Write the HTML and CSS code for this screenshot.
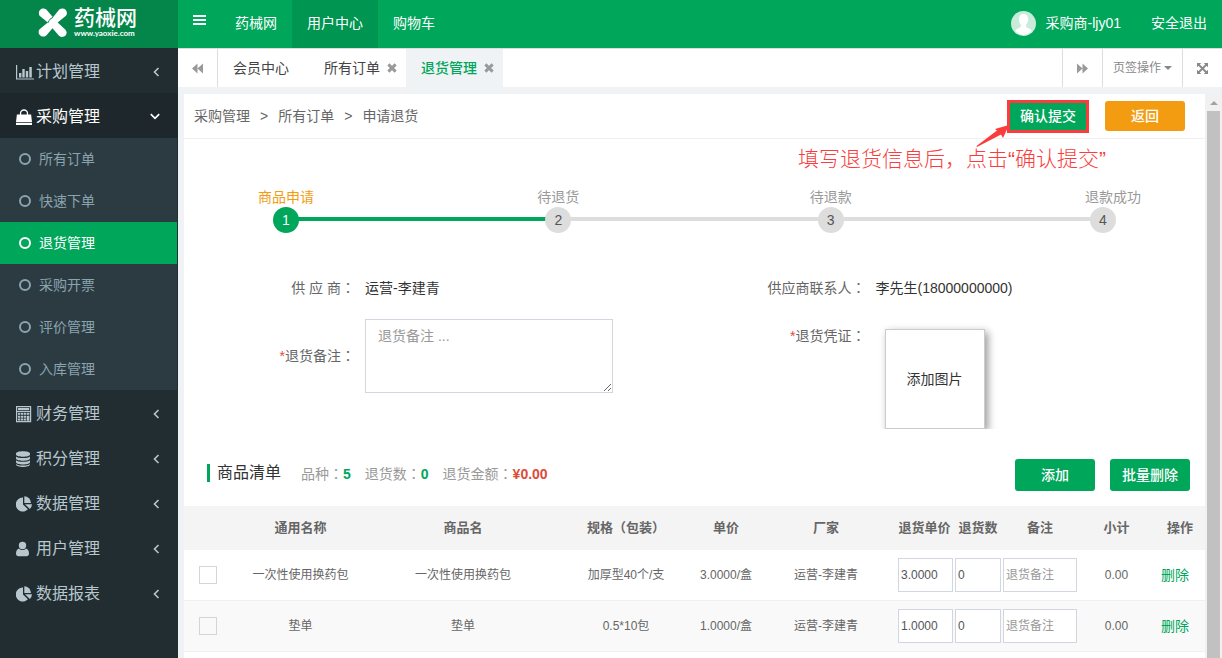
FILE: index.html
```html
<!DOCTYPE html>
<html lang="zh-CN">
<head>
<meta charset="utf-8">
<title>药械网 - 退货管理</title>
<link rel="stylesheet" href="styles.css">
</head>
<body>
<svg class="defs" aria-hidden="true">
  <symbol id="chev-left" viewBox="0 0 7 10"><path d="M5.500 1 1.500 5l4 4" fill="none" stroke="currentColor" stroke-width="1.600"/></symbol>
  <symbol id="pie" viewBox="0 0 16 16"><path d="M7 1.500V8.400l4.900 4.900A7 7 0 1 1 7 1.500z" fill="currentColor"/><path d="M8.300.300A7 7 0 0 1 15 7H8.300z" fill="currentColor"/><path d="M9 8.300H16a7 7 0 0 1-2.200 4.800z" fill="currentColor"/></symbol>
  <symbol id="cross" viewBox="0 0 11 11"><path d="M1.500 1.500l8 8M9.500 1.500l-8 8" stroke="currentColor" stroke-width="3.200" fill="none"/></symbol>
</svg>
<div class="app">
  <aside class="sidebar">
    <a class="logo" href="#">
      <svg class="logo-mark" viewBox="0 0 28 28" aria-hidden="true"><path d="M1.500 7.500C-1 3 4 -1.500 8 1.500L14.500 9 20.500 1.500C25-1.500 30 3 27 7.500L19 14l7.500 7c3.500 4-1.500 9-6 6L14 19.500 8 26.500c-4.500 3.500-9.500-2-6.500-6L9.500 14z" fill="#fff"/><path d="M9.300 14.500C10.500 11.500 12 10 14.500 8.800" stroke="#04864a" stroke-width="1" fill="none"/></svg>
      <span class="logo-text"><span class="logo-name">药械网</span><span class="logo-url">www.yaoxie.com</span></span>
    </a>
    <nav>
      <ul class="menu">
        <li><a class="menu-head" href="#"><svg class="mi" viewBox="0 0 16 16"><path d="M.600 1v14H18" fill="none" stroke="currentColor" stroke-width="1.200"/><path d="M3 9h2.400v4.500H3zM6.300 5h2.400v8.500H6.300zM9.800 7h2.400v6.500H9.800zM13.300 3h2.500v10.500h-2.500z" fill="currentColor"/></svg><span>计划管理</span><svg class="arrow"><use href="#chev-left"/></svg></a></li>
        <li><a class="menu-head open" href="#"><svg class="mi" viewBox="0 0 16 16"><path d="M.900 5.500h14.200L16 13H0zM0 13.700h16V16H0z" fill="currentColor"/><path d="M4.500 8V4.500a3.500 3.500 0 0 1 7 0V8" fill="none" stroke="currentColor" stroke-width="1.300"/></svg><span>采购管理</span><svg class="arrow-down" viewBox="0 0 10 7"><path d="M.800 1.200 5 5.400l4.200-4.200" fill="none" stroke="currentColor" stroke-width="1.700"/></svg></a>
          <ul class="submenu">
            <li><a href="#">所有订单</a></li>
            <li><a href="#">快速下单</a></li>
            <li><a class="current" href="#">退货管理</a></li>
            <li><a href="#">采购开票</a></li>
            <li><a href="#">评价管理</a></li>
            <li><a href="#">入库管理</a></li>
          </ul>
        </li>
        <li><a class="menu-head" href="#"><svg class="mi" viewBox="0 0 16 16"><path d="M.600.600h14v15h-14zM.600 5.500h14" fill="none" stroke="currentColor" stroke-width="1.200"/><path d="M2 2h11.200v2.200H2zM2 6.800h2.400v2H2zM5 6.800h2.400v2H5zM8 6.800h2.400v2H8zM11 6.800h2.400v2H11zM2 9.700h2.400v2H2zM5 9.700h2.400v2H5zM8 9.700h2.400v2H8zM11 9.700h2.400v5H11zM2 12.600h2.400v2H2zM5 12.600h2.400v2H5zM8 12.600h2.400v2H8z" fill="currentColor"/></svg><span>财务管理</span><svg class="arrow"><use href="#chev-left"/></svg></a></li>
        <li><a class="menu-head" href="#"><svg class="mi" viewBox="0 0 16 16"><path d="M0 2.500C0-.600 14-.600 14 2.500v1c0 3-14 3-14 0zM0 5.500c2 2 12 2 14 0v2c0 3-14 3-14 0zM0 9.300c2 2 12 2 14 0v2c0 3-14 3-14 0zM0 13c2 2 12 2 14 0v.500c0 3.300-14 3.300-14 0z" fill="currentColor"/></svg><span>积分管理</span><svg class="arrow"><use href="#chev-left"/></svg></a></li>
        <li><a class="menu-head" href="#"><svg class="mi"><use href="#pie"/></svg><span>数据管理</span><svg class="arrow"><use href="#chev-left"/></svg></a></li>
        <li><a class="menu-head" href="#"><svg class="mi" viewBox="0 0 16 16"><circle cx="6.500" cy="4.500" r="3.700" fill="currentColor"/><path d="M3 7.500c2 2 5 2 7 0 2 .500 3 2.500 3 5 0 2-1 2.700-2.500 2.700h-8C1 15.200 0 14.500 0 12.500c0-2.500 1-4.500 3-5z" fill="currentColor"/></svg><span>用户管理</span><svg class="arrow"><use href="#chev-left"/></svg></a></li>
        <li><a class="menu-head" href="#"><svg class="mi"><use href="#pie"/></svg><span>数据报表</span><svg class="arrow"><use href="#chev-left"/></svg></a></li>
      </ul>
    </nav>
  </aside>

  <div class="main">
    <header class="topbar">
      <button class="toggle" type="button" aria-label="切换菜单"><svg viewBox="0 0 13 10"><path d="M0 0h13v2H0zM0 4h13v2H0zM0 8h13v2H0z" fill="#fff"/></svg></button>
      <a href="#">药械网</a>
      <a class="active" href="#">用户中心</a>
      <a href="#">购物车</a>
      <a class="user" href="#"><svg class="avatar" viewBox="0 0 25 25"><circle cx="12.500" cy="12.500" r="12.500" fill="#c9ebda"/><path d="M12.500 3c3 0 4.700 2 4.700 5.300 0 2.500-.900 4-2 5.200-.400 2 0 2.800 2.300 3.700 2 .800 3 1.700 3.300 2.600A11.500 11.500 0 0 1 12.500 24a11.500 11.500 0 0 1-8.300-4.200c.300-.900 1.300-1.800 3.300-2.600 2.300-.900 2.700-1.700 2.300-3.700-1.100-1.200-2-2.700-2-5.200C7.800 5 9.500 3 12.500 3z" fill="#fff"/></svg>采购商-ljy01</a>
      <a href="#">安全退出</a>
    </header>

    <div class="tabbar">
      <button class="tab-btn first" type="button" aria-label="向左"><svg viewBox="0 0 11 10"><path d="M5.500 0v10L0 5zM11 0v10L5.500 5z" fill="#999"/></svg></button>
      <div class="tabs">
        <a class="tab home" href="#">会员中心</a>
        <a class="tab" href="#">所有订单<svg><use href="#cross"/></svg></a>
        <a class="tab selected" href="#">退货管理<svg><use href="#cross"/></svg></a>
      </div>
      <button class="tab-btn" type="button" aria-label="向右"><svg viewBox="0 0 11 10"><path d="M5.500 0v10L11 5zM0 0v10l5.500-5z" fill="#999"/></svg></button>
      <button class="tab-btn ops" type="button">页签操作<span class="caret"></span></button>
      <button class="tab-btn" type="button" aria-label="全屏"><svg viewBox="0 0 11 11"><path d="M0 0h4.200L0 4.200zM11 0v4.200L6.800 0zM0 11V6.800L4.200 11zM11 11H6.800L11 6.800z" fill="#888"/><path d="M1.500 1.500l8 8M9.500 1.500l-8 8" stroke="#888" stroke-width="1.800"/></svg></button>
    </div>

    <div class="frame">
      <main class="page">
        <div class="page-head">
          <nav class="crumbs"><a href="#">采购管理</a><span>&gt;</span><a href="#">所有订单</a><span>&gt;</span><a href="#">申请退货</a></nav>
          <div class="confirm-wrap">
            <button class="btn confirm" type="button">确认提交</button>
            <svg class="note-arrow" viewBox="0 0 34 24" aria-hidden="true"><path d="M.500 22 21 6.500 19 5 33 1 27 14l-2-3.500L1 23z" fill="#fa3c3c"/></svg>
            <p class="note">填写退货信息后，点击“确认提交”</p>
          </div>
          <button class="btn back" type="button">返回</button>
        </div>

        <ol class="steps">
          <li class="step on"><span class="step-label">商品申请</span><span class="dot">1</span></li>
          <li class="line on"></li>
          <li class="step"><span class="step-label">待退货</span><span class="dot">2</span></li>
          <li class="line"></li>
          <li class="step"><span class="step-label">待退款</span><span class="dot">3</span></li>
          <li class="line"></li>
          <li class="step last"><span class="step-label">退款成功</span><span class="dot">4</span></li>
        </ol>

        <form class="form">
          <div class="field"><span class="label">供 应 商<span class="colon" lang="zh-TW">：</span></span><span class="value">运营-李建青</span></div>
          <div class="field"><span class="label">供应商联系人<span class="colon" lang="zh-TW">：</span></span><span class="value">李先生(18000000000)</span></div>
          <div class="field"><label class="label mid" for="remark"><i>*</i>退货备注<span class="colon" lang="zh-TW">：</span></label><textarea id="remark" placeholder="退货备注 ..."></textarea></div>
          <div class="field"><span class="label low"><i>*</i>退货凭证<span class="colon" lang="zh-TW">：</span></span><div class="upload-wrap"><button class="upload" type="button">添加图片</button></div></div>
        </form>

        <div class="list-head">
          <h2>商品清单</h2>
          <p>品种<span class="colon" lang="zh-TW">：</span><b>5</b></p>
          <p>退货数<span class="colon" lang="zh-TW">：</span><b>0</b></p>
          <p>退货金额<span class="colon" lang="zh-TW">：</span><b class="money">¥0.00</b></p>
          <div class="list-actions">
            <button class="btn" type="button">添加</button>
            <button class="btn" type="button">批量删除</button>
          </div>
        </div>

        <table class="goods">
          <colgroup><col class="c-check"><col class="c-name"><col class="c-goods"><col class="c-spec"><col class="c-unit"><col class="c-maker"><col class="c-price"><col class="c-qty"><col class="c-note"><col class="c-sum"><col class="c-op"></colgroup>
          <thead><tr><th></th><th>通用名称</th><th>商品名</th><th>规格（包装）</th><th>单价</th><th>厂家</th><th>退货单价</th><th>退货数</th><th>备注</th><th>小计</th><th>操作</th></tr></thead>
          <tbody>
            <tr><td><input type="checkbox" aria-label="选择"></td><td>一次性使用换药包</td><td>一次性使用换药包</td><td>加厚型40个/支</td><td>3.0000/盒</td><td>运营-李建青</td><td class="in price"><input type="text" aria-label="退货单价" value="3.0000"></td><td class="in"><input type="text" aria-label="退货数" value="0"></td><td class="in"><input type="text" aria-label="备注" placeholder="退货备注"></td><td>0.00</td><td class="op"><a href="#">删除</a></td></tr>
            <tr><td><input type="checkbox" aria-label="选择"></td><td>垫单</td><td>垫单</td><td>0.5*10包</td><td>1.0000/盒</td><td>运营-李建青</td><td class="in price"><input type="text" aria-label="退货单价" value="1.0000"></td><td class="in"><input type="text" aria-label="退货数" value="0"></td><td class="in"><input type="text" aria-label="备注" placeholder="退货备注"></td><td>0.00</td><td class="op"><a href="#">删除</a></td></tr>
          </tbody>
        </table>
      </main>
      <div class="scrollbar" aria-hidden="true"><span class="scroll-up"></span><span class="scroll-thumb"></span></div>
    </div>
  </div>
</div>
</body>
</html>
```
FILE: styles.css
```css
*, *::before { box-sizing: border-box; }
body {
  margin: 0;
  font: 14px/20px "Liberation Sans", "Noto Sans CJK SC", sans-serif;
  color: #333;
}
a { color: inherit; text-decoration: none; }
ul, ol, p, h2 { margin: 0; padding: 0; list-style: none; }
button, input, textarea { font: inherit; color: inherit; }
button { padding: 0; border: 0; background: none; cursor: pointer; }
.defs { display: none; }
.app { display: flex; height: 100vh; overflow: hidden; }

/* sidebar */
.sidebar { flex: none; width: 178px; background: #222d32; color: #b8c7ce; }
.logo { display: flex; align-items: center; gap: 7px; height: 48px; padding-left: 38px; background: #04864a; color: #fff; }
.logo-mark { width: 29px; height: 29px; margin-bottom: 3px; }
.logo-text { display: flex; flex-direction: column; margin-bottom: 3px; }
.logo-name { font-size: 21px; line-height: 22px; font-weight: 500; }
.logo-url { font: bold 8px/9px Lato, sans-serif; }
.menu-head { display: flex; align-items: center; height: 45px; padding: 2px 18px 0 16px; font-size: 16px; }
.menu-head span { flex: 1; margin-left: 4px; }
.menu-head.open { background: #1e282c; color: #fff; }
.mi { flex: none; width: 16px; height: 16px; overflow: visible; }
.arrow { width: 7px; height: 10px; }
.arrow-down { width: 10px; height: 7px; }
.submenu { border-right: 1px solid #222d32; background: #2c3b41; color: #8aa4af; }
.submenu a { display: flex; align-items: center; gap: 8px; height: 42px; padding-left: 19px; }
.submenu a::before { content: ""; width: 12px; height: 12px; border: 2px solid; border-radius: 50%; }
.submenu .current { background: #00a65a; color: #fff; }

/* top bar */
.main { flex: 1; min-width: 0; display: flex; flex-direction: column; background: #eff3f5; }
.topbar { display: flex; height: 48px; background: #00a65a; color: #fff; }
.topbar a { display: flex; align-items: center; padding: 0 15px 2px; }
.topbar .active { background: #009551; }
.toggle { width: 42px; padding-bottom: 8px; }
.toggle svg { width: 13px; height: 10px; }
.topbar .user { margin-left: auto; gap: 10px; }
.avatar { width: 25px; height: 25px; }

/* page tabs */
.tabbar { display: flex; height: 39px; border-top: 1px solid #ddd; background: #fff; }
.tabs { flex: 1; display: flex; }
.tab { display: flex; align-items: center; gap: 7px; padding: 0 9px 0 15px; color: #444; }
.tab.home { padding-right: 20px; }
.tab svg { width: 10px; height: 10px; color: #999; }
.tab.selected { background: #eff3f5; color: #00a65a; font-weight: 500; }
.tab-btn { width: 40px; padding-bottom: 2px; border-left: 1px solid #ddd; }
.tab-btn.first { border-left: 0; border-right: 1px solid #ddd; }
.tab-btn svg { width: 11px; height: 11px; vertical-align: middle; }
.tab-btn.ops { display: flex; align-items: center; justify-content: center; gap: 3px; width: 80px; padding-bottom: 0; font-size: 12px; color: #888; }
.caret { border: 4px solid transparent; border-top-color: #888; border-bottom: 0; }

/* framed page */
.frame { flex: 1; min-height: 0; display: flex; padding: 7px 0 0 6px; }
.page { flex: 1; min-width: 0; overflow: hidden; background: #fff; }
.scrollbar { display: flex; flex-direction: column; align-items: center; width: 17px; background: #f1f1f1; }
.scroll-up { margin: 7px 0 6px; border: 4px solid transparent; border-top: 0; border-bottom-color: #a3a3a3; }
.scroll-thumb { flex: 1; width: 13px; background: #c1c1c1; }

.btn { width: 80px; height: 32px; border-radius: 3px; background: #00a65a; color: #fff; font-weight: 500; }
.btn.back { height: 30px; background: #f39c12; }
.btn.confirm { width: 82px; height: 33px; border: 3px solid #fa3c3c; border-radius: 0; }
.page-head { display: flex; align-items: center; height: 45px; padding: 0 20px 0 10px; border-bottom: 1px solid #f0f0f0; color: #666; }
.crumbs { flex: 1; display: flex; gap: 10px; }
.confirm-wrap { position: relative; margin-right: 16px; }
.note { position: absolute; top: 44px; right: -17px; white-space: nowrap; font-size: 21px; line-height: 30px; font-weight: 300; color: #fa3c3c; }
.note-arrow { position: absolute; top: 24px; left: -31px; width: 34px; height: 24px; }

/* progress */
.steps { display: flex; align-items: flex-end; padding: 48px 74px 0; color: #999; }
.step { display: flex; flex-direction: column; align-items: center; width: 56px; white-space: nowrap; }
.step.on .step-label { color: #f39c12; }
.step.last .step-label { margin-right: -20px; }
.dot { width: 26px; height: 26px; border-radius: 50%; background: #ddd; color: #555; line-height: 26px; text-align: center; }
.step.on .dot { background: #00a65a; color: #fff; }
.line { flex: 1; height: 4px; margin: 0 -16px 12px; background: #ddd; }
.line.on { background: #00a65a; }

/* form */
.colon { font-family: "Noto Sans CJK TC", sans-serif; line-height: 1; }
.form { display: grid; grid-template-columns: 1fr 1fr; row-gap: 21px; padding-top: 45px; }
.field { display: grid; grid-template-columns: 171px 1fr; column-gap: 10px; align-items: start; }
.label { text-align: right; color: #666; white-space: pre; }
.label.mid { padding-top: 27px; }
.label.low { padding-top: 7px; }
.label i { font-style: normal; color: #dd4b39; }
textarea { width: 248px; height: 74px; padding: 6px 12px; border: 1px solid #d2d6de; background: #fff; display: block; }
::placeholder { color: #999; opacity: 1; }
.upload-wrap { padding: 10px 9px 0; overflow: hidden; }
.upload { display: block; width: 100px; height: 100px; border: 1px solid #ccc; background: #fff; box-shadow: 3px 3px 8px rgba(0, 0, 0, .4); }

/* goods list */
.list-head { display: flex; align-items: center; gap: 14px; padding: 30px 15px 15px 23px; color: #999; }
.list-head h2 { margin: 0 6px 4px 0; padding-left: 7px; border-left: 3px solid #00a65a; font-size: 16px; line-height: 18px; font-weight: 400; color: #333; }
.list-head p { margin-bottom: 2px; }
.list-head b { color: #00a65a; }
.list-head .money { color: #dd4b39; }
.list-actions { display: flex; gap: 15px; margin-left: auto; }
.goods { width: 100%; table-layout: fixed; border-collapse: separate; border-spacing: 0; font-size: 12px; text-align: center; color: #666; }
.goods th { height: 44px; padding: 0; background: #f4f4f4; font-size: 13px; white-space: nowrap; }
.goods td { height: 51px; padding: 0; border-bottom: 1px solid #f0f0f0; }
.goods tbody tr:nth-child(even) { background: #f9f9f9; }
.goods .op { padding-right: 10px; font-size: 14px; color: #00a65a; }
.goods .in { padding: 0 1px; }
.goods .price { padding-left: 3px; }
.goods input[type=text] { display: block; width: 100%; height: 34px; padding: 0 3px 0 2px; border: 1px solid #d2d6de; background: #fff; color: #555; }
.goods input[type=checkbox] { display: block; appearance: none; width: 18px; height: 18px; margin: 0 auto; border: 1px solid #d5d5d5; }
.c-check { width: 48px; }
.c-name { width: 137px; }
.c-goods { width: 188px; }
.c-spec { width: 138px; }
.c-unit { width: 62px; }
.c-maker { width: 138px; }
.c-price { width: 59px; }
.c-qty { width: 48px; }
.c-note { width: 76px; }
.c-sum { width: 77px; }
.c-op { width: 50px; }
```
